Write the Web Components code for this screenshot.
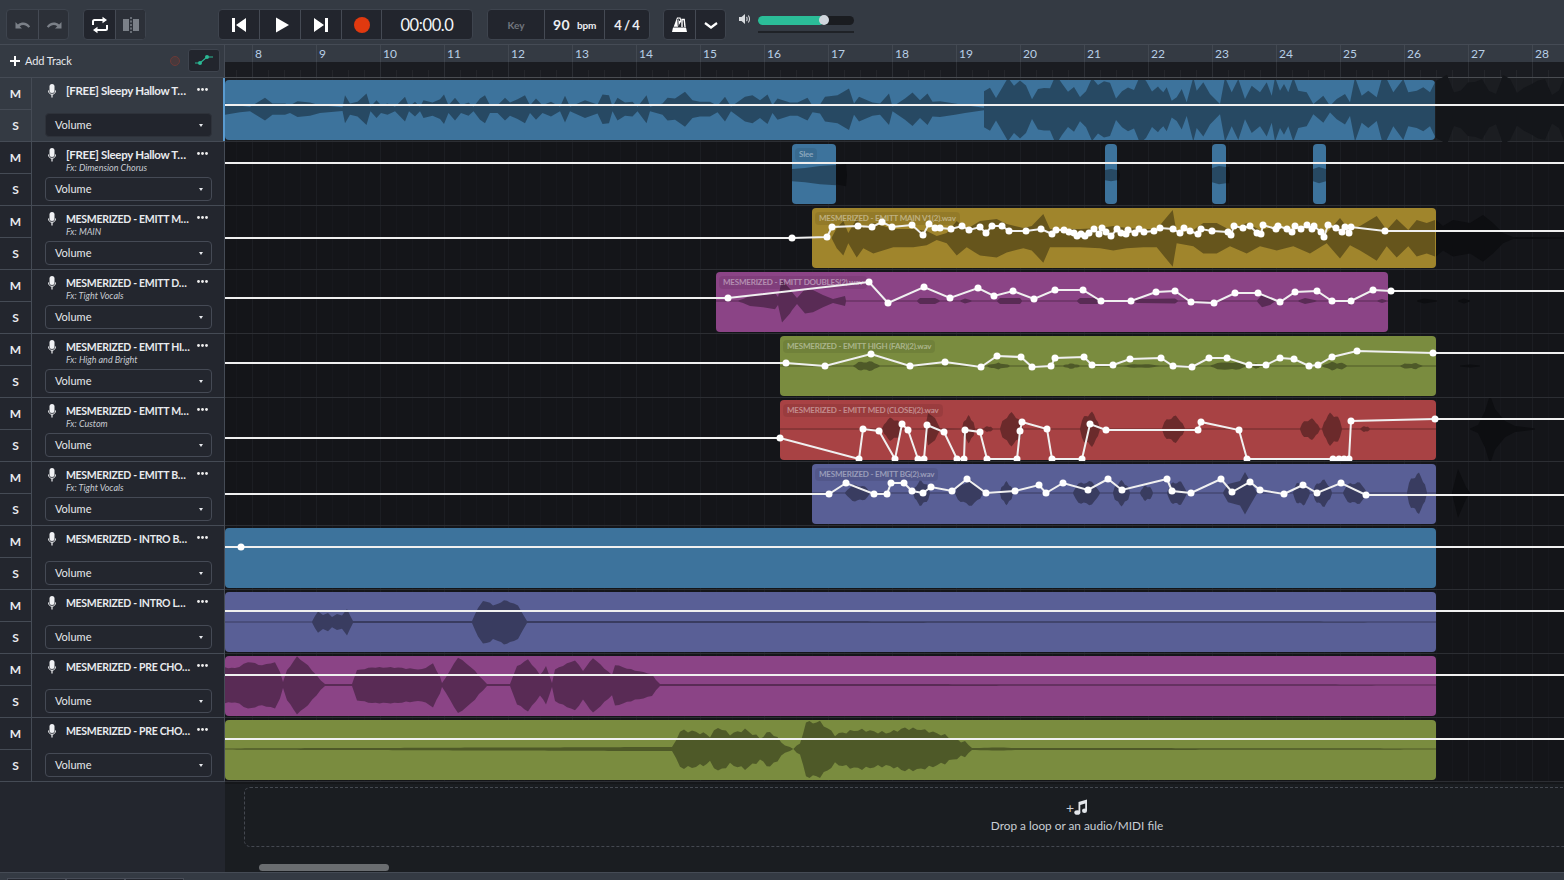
<!DOCTYPE html>
<html>
<head>
<meta charset="utf-8">
<title>Studio</title>
<style>
  html, body { margin: 0; height: 100%; background: #343a43; overflow: hidden; }
  body { font-family: "Lato", "Noto Sans", sans-serif; color: #e8eaee; }
</style>
</head>
<body>
<daw-app>
  <daw-toolbar slot="toolbar"></daw-toolbar>
  <daw-header slot="header"></daw-header>
  <daw-footer slot="footer"></daw-footer>
</daw-app>

<script>
const ICONS = {
  undo: '<path d="M1.500 6v6.500H8L5.700 10.200c2.800-2 6.300-1.500 8.600 1.500l1.900-1.200C13 5.800 8 5.300 3.900 8.400z" fill="currentColor"/>',
  redo: '<path d="M16.500 6v6.500H10l2.300-2.300c-2.800-2-6.300-1.500-8.600 1.500L1.800 10.500C5 5.800 10 5.300 14.100 8.400z" fill="currentColor"/>',
  loop: '<path d="M2 9V5.500C2 4.600 2.700 4 3.500 4H13M16 9v3.500c0 .9-.7 1.500-1.500 1.500H5" fill="none" stroke="currentColor" stroke-width="2"/><path d="M11.500 0.800 16 4l-4.500 3.200zM6.500 10.800 2 14l4.500 3.200z" fill="currentColor"/>',
  split: '<path d="M1 3h6v12H1zM11 3h6v12h-6z" fill="currentColor"/><path d="M9 1v16" stroke="currentColor" stroke-width="1.500" stroke-dasharray="2 1.500" fill="none"/>',
  back: '<path d="M1 2h3v14H1zM15 2v14L5 9z" fill="currentColor"/>',
  play: '<path d="M3 1.500 16 9 3 16.500z" fill="currentColor"/>',
  forward: '<path d="M14 2h3v14h-3zM3 2v14l10-7z" fill="currentColor"/>',
  metronome: '<path d="M6 1.500h3.500L10.500 5 6.800 10.800H2.700zM2 11.500h13l1 4.500H1z" fill="currentColor"/><path d="M7.200 9.800 6.800 3h1.700l.2 2M12 2.500 12 10" fill="none" stroke="#23262e" stroke-width="1"/><path d="M11 11V3.500h2.200L14 11" fill="none" stroke="currentColor" stroke-width="1.400"/>',
  chevron: '<path d="M3 7l6 4.500L15 7" fill="none" stroke="currentColor" stroke-width="2.200"/>'
};

function icon(name, size) {
  return `<svg width="${size}" height="${size}" viewBox="0 0 18 18">${ICONS[name]}</svg>`;
}

// turn an envelope [x, amp, x, amp ...] into a closed waveform around cy
function wavePath(env, cy, wobble) {
  const pts = [];
  for (let i = 0; i < env.length - 2; i += 2) {
    const x0 = env[i], a0 = env[i + 1], x1 = env[i + 2], a1 = env[i + 3];
    const steps = wobble ? Math.max(1, Math.round((x1 - x0) / 4)) : 1;
    for (let s = 0; s < steps; s++) {
      const t = s / steps, x = x0 + (x1 - x0) * t;
      let a = a0 + (a1 - a0) * t;
      if (wobble && a > 2) a += Math.sin(x * 1.7) * wobble + Math.sin(x * 0.6) * wobble;
      pts.push([x, a]);
    }
  }
  pts.push([env[env.length - 2], env[env.length - 1]]);
  const top = pts.map(p => `${p[0].toFixed(1)},${(cy - p[1]).toFixed(1)}`);
  const bottom = pts.slice().reverse().map(p => `${p[0].toFixed(1)},${(cy + p[1] * 1.03).toFixed(1)}`);
  return 'M' + top.concat(bottom).join('L') + 'Z';
}

// one rounded phrase of a vocal, with a thin line either side of it
function blob(x0, x1, amp) {
  const out = [x0, 0.6];
  for (let i = 1; i < 10; i++) {
    const t = i / 10;
    const a = amp * Math.pow(Math.sin(Math.PI * t), 0.6) * (0.86 + 0.14 * Math.sin(14 * t + x0));
    out.push(x0 + (x1 - x0) * t, a);
  }
  out.push(x1, 0.6);
  return out;
}

const tplApp = document.createElement('template');
tplApp.innerHTML = `
  <style>
    :host { display: flex; flex-direction: column; width: 1564px; height: 880px; overflow: hidden; background: #343a43; }
    .tracks { display: flex; flex-direction: column; }
    .tabs { display: flex; height: 8px; padding: 5px 0 0 7px; box-sizing: border-box; background: #343a43; border-top: 1px solid #454b55; flex: none; }
    .tabs i { display: block; width: 59px; height: 8px; background: #23262e; border: 1px solid #474c57; border-bottom: 0; box-sizing: border-box; }
  </style>
  <slot name="toolbar"></slot>
  <slot name="header"></slot>
  <div class="tracks"><slot></slot></div>
  <slot name="footer"></slot>
  <div class="tabs"><i></i><i></i><i></i></div>
`;
class DawApp extends HTMLElement {
  constructor() {
    super();
    this.attachShadow({ mode: 'open' });
    this.shadowRoot.appendChild(tplApp.content.cloneNode(true));
  }
}

const tplToolbar = document.createElement('template');
tplToolbar.innerHTML = `
  <style>
    :host { display: flex; align-items: flex-start; box-sizing: border-box; height: 45px; padding: 9px 0 0 6px; background: #343a43; border-bottom: 1px solid #454b55; flex: none; }
    .group { display: flex; height: 31px; border: 1px solid #3e444e; border-radius: 4px; background: #22252d; box-sizing: border-box; overflow: hidden; }
    .group.off { background: #2c3038; }
    .cell { display: flex; align-items: center; justify-content: center; box-sizing: border-box; height: 100%; border-left: 1px solid #454a54; color: #fff; }
    .cell:first-child { border-left: 0; }
    .cell.dim { background: #2c3038; color: #7b8088; }
    .rec { width: 16px; height: 16px; border-radius: 50%; background: #e0390f; }
    .time { font-size: 16.500px; letter-spacing: -.4px; color: #f3f5f8; }
    .key { font-size: 10px; color: #71757d; font-weight: 700; }
    .bpm { font-size: 14px; font-weight: 700; color: #eceef2; letter-spacing: .4px; }
    .bpm small { font-size: 10px; margin-left: 7px; letter-spacing: -.2px; }
    .sig { font-size: 13px; font-weight: 700; color: #eceef2; word-spacing: -1px; }
    .vol { display: flex; flex-direction: column; margin-left: 7px; margin-top: 7px; gap: 6px; }
    .bar { position: relative; width: 96px; height: 9px; border-radius: 5px; background: #1a1c20; }
    .bar b { display: block; width: 66px; height: 9px; border-radius: 5px; background: #2bbd98; }
    .bar i { position: absolute; left: 61px; top: -1px; width: 10px; height: 10px; border-radius: 50%; background: #d0d6dd; }
    .rule { width: 96px; height: 2px; background: #1f2227; }
    .speaker { margin: 4px 0 0 13px; color: #d9dce0; }
  </style>
  <div class="group off" style="width:63px">
    <div class="cell" style="width:32px;color:#7b8088">${icon('undo', 18)}</div>
    <div class="cell" style="width:30px;color:#7b8088">${icon('redo', 18)}</div>
  </div>
  <div class="group" style="width:63px;margin-left:14px">
    <div class="cell" style="width:32px">${icon('loop', 18)}</div>
    <div class="cell dim" style="width:30px">${icon('split', 18)}</div>
  </div>
  <div class="group" style="width:255px;margin-left:72px">
    <div class="cell" style="width:40px;padding-left:2px">${icon('back', 18)}</div>
    <div class="cell" style="width:41px;padding-left:3px">${icon('play', 18)}</div>
    <div class="cell" style="width:41px;padding-right:2px">${icon('forward', 18)}</div>
    <div class="cell" style="width:40px"><span class="rec"></span></div>
    <div class="cell time" style="width:91px">00:00.0</div>
  </div>
  <div class="group" style="width:163px;margin-left:14px">
    <div class="cell key" style="width:56px">Key</div>
    <div class="cell bpm" style="width:60px">90<small>bpm</small></div>
    <div class="cell sig" style="width:45px">4 / 4</div>
  </div>
  <div class="group" style="width:63px;margin-left:13px">
    <div class="cell" style="width:32px">${icon('metronome', 18)}</div>
    <div class="cell" style="width:30px">${icon('chevron', 18)}</div>
  </div>
  <svg class="speaker" width="12" height="12" viewBox="0 0 12 12"><path d="M0 4h2.500L6 1v10L2.500 8H0z" fill="currentColor"/><path d="M7.500 4c.8.8.8 3.200 0 4M9.300 2.500c1.600 1.800 1.600 5.200 0 7" fill="none" stroke="currentColor" stroke-width="1.100"/></svg>
  <div class="vol"><div class="bar"><b></b><i></i></div><div class="rule"></div></div>
`;
class DawToolbar extends HTMLElement {
  constructor() {
    super();
    this.attachShadow({ mode: 'open' });
    this.shadowRoot.appendChild(tplToolbar.content.cloneNode(true));
  }
}

const tplHeader = document.createElement('template');
tplHeader.innerHTML = `
  <style>
    :host { display: flex; height: 33px; flex: none; }
    .left { display: flex; align-items: center; box-sizing: border-box; width: 225px; padding: 0 4px 0 10px; border-right: 1px solid #454b55; border-bottom: 1px solid #454b55; font-size: 11px; letter-spacing: -.1px; color: #e6e8ec; }
    .plus { width: 10px; height: 10px; margin-right: 5px; }
    .label { flex: 1; margin-top: -2px; }
    .arm { width: 8px; height: 8px; border-radius: 50%; border: 1px solid #6a3a38; background: #48393c; margin-right: 8px; }
    .auto { display: flex; align-items: center; justify-content: center; width: 32px; height: 23px; margin-top: -2px; background: #22252d; border: 1px solid #3e444e; border-radius: 3px; box-sizing: border-box; }
    .ruler { flex: 1; display: flex; flex-direction: column; overflow: hidden; }
    .bars { display: flex; height: 17px; padding-left: 27px; background: #343a43; }
    .bars span { flex: 0 0 64px; box-sizing: border-box; padding: 1px 0 0 2px; font-size: 12px; line-height: 15px; color: #b8cfe6; border-left: 1px solid #424851; }
    .ticks { flex: 1; box-sizing: border-box; border-bottom: 1px solid #4a4d52; background-color: #1a1c21;
      background-image:
        linear-gradient(90deg, #2c2f35 1px, transparent 1px),
        linear-gradient(90deg, #24262b 1px, transparent 1px);
      background-size: 64px 100%, 16px 7px;
      background-position: 27px 0, 11px bottom;
      background-repeat: repeat-x; }
  </style>
  <div class="left">
    <svg class="plus" viewBox="0 0 10 10"><path d="M4 0h2v4h4v2H6v4H4V6H0V4h4z" fill="#fff"/></svg>
    <span class="label">Add Track</span>
    <span class="arm"></span>
    <span class="auto"><svg width="20" height="12" viewBox="0 0 20 12"><path d="M1 9h5L13 3h6" fill="none" stroke="#2bb894" stroke-width="1.200"/><circle cx="6" cy="9" r="2" fill="#2bb894"/><circle cx="13" cy="3" r="2" fill="#2bb894"/></svg></span>
  </div>
  <div class="ruler"><div class="bars"></div><div class="ticks"></div></div>
`;
class DawHeader extends HTMLElement {
  constructor() {
    super();
    this.attachShadow({ mode: 'open' });
    this.shadowRoot.appendChild(tplHeader.content.cloneNode(true));
    const bars = this.shadowRoot.querySelector('.bars');
    for (let n = 8; n <= 28; n++) {
      const s = document.createElement('span');
      s.textContent = n;
      bars.appendChild(s);
    }
  }
}

const tplTrack = document.createElement('template');
tplTrack.innerHTML = `
  <style>
    :host { display: flex; height: 64px; flex: none; }
    .head { display: flex; width: 225px; flex: none; box-sizing: border-box; background: #23262e; border-right: 1px solid #454b55; border-bottom: 1px solid #454b55; }
    :host([selected]) .head { background: #343a43; border-right: 0; box-shadow: inset -2px 0 0 #5a9bd0; }
    .ms { display: flex; flex-direction: column; width: 32px; flex: none; box-sizing: border-box; border-right: 1px solid #454b55; font-weight: 700; font-size: 12px; color: #e8eaee; }
    .ms span { display: flex; align-items: center; justify-content: center; height: 31px; }
    .ms span:first-child { border-bottom: 1px solid #454b55; }
    .ms span:last-child { flex: 1; }
    .body { flex: 1; min-width: 0; box-sizing: border-box; padding: 6px 0 0 16px; position: relative; }
    .title { display: flex; align-items: center; height: 15px; }
    .mic { width: 8px; height: 14px; flex: none; margin-right: 10px; margin-top: -2px; }
    .name { width: 126px; flex: none; margin-top: -2px; font-size: 10.500px; letter-spacing: -.3px; font-weight: 700; white-space: nowrap; color: #e9ebef; }
    :host([mixed]) .name { font-size: 11.500px; }
    .dots { width: 11px; height: 3px; margin-left: 5px; margin-top: -5px; flex: none; }
    .fx { position: absolute; left: 34px; top: 20px; font-size: 9px; font-style: italic; color: #c7cbd2; line-height: 11px; }
    .select { position: absolute; left: 13px; top: 35px; display: flex; align-items: center; justify-content: space-between; box-sizing: border-box; width: 167px; height: 24px; padding: 0 8px 2px 9px; font-size: 11px; color: #e6e8ec; background: #23262e; border: 1px solid #454a55; border-radius: 4px; }
    :host([selected]) .select { background: #22252d; border-color: #2e323a; }
    .caret { width: 0; height: 0; margin-top: 3px; border: 2.500px solid transparent; border-top: 3.500px solid #e6e8ec; border-bottom: 0; }
    .lane { position: relative; flex: 1; box-sizing: border-box; border-bottom: 1px solid #2c2e33; overflow: hidden; background-color: #141519;
      background-image:
        linear-gradient(90deg, #1c1e23 1px, transparent 1px),
        linear-gradient(90deg, #17181d 1px, transparent 1px);
      background-size: 64px 100%, 16px 100%;
      background-position: 27px 0, 11px 0; }
    :host([selected]) .lane { background-color: #1b1d21; overflow: visible; }
    :host([selected]) .lane { background-image: linear-gradient(90deg, #212328 1px, transparent 1px), linear-gradient(90deg, #1e2025 1px, transparent 1px); }
  </style>
  <div class="head">
    <div class="ms"><span>M</span><span>S</span></div>
    <div class="body">
      <div class="title">
        <svg class="mic" viewBox="0 0 8 14"><rect x="1.500" y="0" width="5" height="9" rx="2.500" fill="#f0f1f4"/><path d="M0.500 6.500C0.500 9 2 10.300 4 10.300S7.500 9 7.500 6.500" fill="none" stroke="#f0f1f4" stroke-width="1"/><path d="M4 10.300V13.500" stroke="#f0f1f4" stroke-width="1.200"/></svg>
        <span class="name"></span>
        <svg class="dots" viewBox="0 0 11 3"><circle cx="1.500" cy="1.500" r="1.400" fill="#eee"/><circle cx="5.500" cy="1.500" r="1.400" fill="#eee"/><circle cx="9.500" cy="1.500" r="1.400" fill="#eee"/></svg>
      </div>
      <div class="fx"></div>
      <div class="select"><span>Volume</span><i class="caret"></i></div>
    </div>
  </div>
  <div class="lane"><slot></slot></div>
`;
class DawTrack extends HTMLElement {
  constructor() {
    super();
    this.attachShadow({ mode: 'open' });
    this.shadowRoot.appendChild(tplTrack.content.cloneNode(true));
  }

  connectedCallback() {
    this.shadowRoot.querySelector('.name').textContent = this.getAttribute('name');
    this.shadowRoot.querySelector('.fx').textContent = this.getAttribute('fx') || '';
  }
}

const tplClip = document.createElement('template');
tplClip.innerHTML = `
  <style>
    :host { display: block; position: absolute; top: 2px; height: 60px; border-radius: 4px; overflow: hidden; background: var(--clip-color); }
    svg { position: absolute; left: 0; top: 0; display: block; }
    .label { position: absolute; left: 3px; top: 4px; padding: 0 4px; height: 13px; line-height: 13px; border-radius: 4px; background: rgba(0, 0, 0, 0.08); color: rgba(255, 255, 255, 0.42); font-size: 8px; letter-spacing: -.2px; font-weight: 700; white-space: nowrap; }
  </style>
  <svg><path fill="rgba(0,0,0,.36)"/></svg>
  <span class="label"><slot></slot></span>
`;
class DawClip extends HTMLElement {
  constructor() {
    super();
    this.attachShadow({ mode: 'open' });
    this.shadowRoot.appendChild(tplClip.content.cloneNode(true));
  }

  connectedCallback() {
    const x = +this.getAttribute('x');
    const w = +this.getAttribute('w');
    const top = +this.getAttribute('top');
    this.style.left = (x - 225) + 'px';
    this.style.width = w + 'px';
    const svg = this.shadowRoot.querySelector('svg');
    svg.setAttribute('width', w);
    svg.setAttribute('height', 60);
    svg.setAttribute('viewBox', `${x} ${top + 2} ${w} 60`);
    if (this.env) svg.firstElementChild.setAttribute('d', wavePath(this.env, this.cy, this.wobble));
    if (!this.textContent.trim()) this.shadowRoot.querySelector('.label').style.display = 'none';
  }
}

// lane-wide layer in page coordinates: ghost waveform or automation line
const tplLayer = document.createElement('template');
tplLayer.innerHTML = `
  <style>
    :host { display: block; position: absolute; left: 0; top: 0; pointer-events: none; }
    svg { display: block; overflow: visible; }
  </style>
  <svg width="1339" height="64"></svg>
`;
class DawLayer extends HTMLElement {
  constructor() {
    super();
    this.attachShadow({ mode: 'open' });
    this.shadowRoot.appendChild(tplLayer.content.cloneNode(true));
  }

  connectedCallback() {
    const svg = this.shadowRoot.querySelector('svg');
    svg.setAttribute('viewBox', `225 ${this.top0} 1339 64`);
    if (this.ghost) {
      svg.innerHTML = this.ghost.map(g =>
        `<path d="${wavePath(g, this.cy, 0)}" fill="${this.fill}"/>`).join('');
    }
    if (this.points) {
      const p = this.points;
      const line = [[225, this.startY], ...p, [1564, this.endY]];
      const poly = line.map(q => q.join(',')).join(' ');
      const dots = p.map(q => `<circle cx="${q[0]}" cy="${q[1]}" r="3.500" fill="#fff"/>`).join('');
      svg.innerHTML = `<polyline points="${poly}" fill="none" stroke="#f0f0f0" stroke-width="2"/>${dots}`;
    }
  }
}

const tplFooter = document.createElement('template');
tplFooter.innerHTML = `
  <style>
    :host { display: flex; flex: 1; min-height: 0; }
    .left { width: 225px; flex: none; background: #23262e; }
    .area { position: relative; flex: 1; overflow: hidden; background: #1a1d21; border-top: 2px solid #15171a; box-sizing: border-box; }
    .drop { position: absolute; left: 19px; top: 3px; width: 1666px; height: 60px; box-sizing: border-box; border: 1px dashed #444850; border-radius: 6px; display: flex; flex-direction: column; align-items: center; color: #c9ced4; font-size: 11.800px; }
    .note { display: flex; align-items: center; height: 20px; margin-top: 9px; font-size: 14px; }
    .text { line-height: 16px; margin-top: 1px; }
    .thumb { position: absolute; left: 34px; top: 80px; width: 130px; height: 7px; border-radius: 4px; background: #6a6d70; }
  </style>
  <div class="left"></div>
  <div class="area">
    <div class="drop">
      <div class="note"><span>+</span><svg width="14" height="16" viewBox="0 0 14 16"><path d="M4.500 3 13 0.500v11.200h-1.800V4.500L6.300 6v7.500H4.500z" fill="#e3e6ea"/><ellipse cx="3.300" cy="13.500" rx="3" ry="2.300" fill="#e3e6ea"/><ellipse cx="10.500" cy="11.800" rx="2.500" ry="2.200" fill="#e3e6ea"/></svg></div>
      <div class="text">Drop a loop or an audio/MIDI file</div>
    </div>
    <div class="thumb"></div>
  </div>
`;
class DawFooter extends HTMLElement {
  constructor() {
    super();
    this.attachShadow({ mode: 'open' });
    this.shadowRoot.appendChild(tplFooter.content.cloneNode(true));
  }
}

customElements.define('daw-app', DawApp);
customElements.define('daw-toolbar', DawToolbar);
customElements.define('daw-header', DawHeader);
customElements.define('daw-track', DawTrack);
customElements.define('daw-clip', DawClip);
customElements.define('daw-layer', DawLayer);
customElements.define('daw-footer', DawFooter);

const BLUE = '#3d739c', GOLD = '#a0852c', PURPLE = '#8b4486', OLIVE = '#7a8c3f', RED = '#a84244', INDIGO = '#595f96';

// waveform of the first track, read off the reference
const quiet = [0,75,30,82,50,85,80,58,95,75,120,75,130,80,145,68,170,72,190,80,235,86,240,50,250,75,265,70,283,45,291,85,303,65,312,80,325,75,340,85,360,55,368,85,380,70,390,85,397,65,415,72,430,62,438,48,447,80,460,58,472,80,487,72,497,85,510,60,520,50,530,80,545,80,560,58,570,72,585,62,600,50,610,80,622,60,635,80,652,70,670,85,680,52,690,85,720,65,745,78,755,48,768,50,775,85,785,58,800,72,815,70,825,85,843,50,850,85,875,75,885,58,900,60,920,40,935,65,950,70,970,70,985,82,1000,55,1012,85,1040,55,1055,50,1070,65,1085,48,1095,80,1105,60,1130,72,1145,72,1165,58,1175,82,1190,78,1200,55,1225,50,1248,30,1258,75,1268,55,1295,72,1310,75,1328,45,1335,85,1360,60,1375,42,1390,65,1405,45,1415,70,1430,68,1460,75,1480,80,1518,88];
const loud = [0,90,10,100,20,85,35,125,50,115,65,90,80,130,100,55,110,95,130,70,150,105,180,135,195,55,215,100,235,60,255,120,275,80,300,100,320,70,335,110,345,55,360,95,372,75,385,100,400,55,415,95,440,100,460,135,490,110,510,140,530,120,555,105,570,130,585,55,605,110,625,95,650,115,665,60,680,60,700,100,730,60,745,100,770,95,790,85,810,100,825,70];
const env1 = [];
for (let i = 0; i < quiet.length; i += 2) env1.push(225 + quiet[i] / 2, 30.500 - quiet[i + 1] / 3);
const mid1 = [];
for (let x = 984; x < 1160; x += 6) {
  mid1.push(x, 22 + Math.sin(x * 0.9) * 7 + Math.sin(x * 0.37) * 6);
}
const loud1 = [];
for (let i = 0; i < loud.length; i += 2) loud1.push(1160 + loud[i] / 3, (150 - loud[i + 1]) / 3);
const tail1 = [];
for (let x = 1440; x <= 1570; x += 7) {
  tail1.push(x, 24 + Math.sin(x * 1.1) * 8 + Math.sin(x * 0.31) * 5);
}

const gold1 = [155,.5,170,10,190,17,205,5,230,19,250,10,280,15,340,9,400,9,440,7,470,2,500,5,530,17,560,9,585,14,600,17,650,19,680,14,730,10,755,12,790,24,810,9,850,9,900,9,960,10,1000,12,1040,10,1090,9,1130,9];
const gold2 = [38,28,50,5,100,8,130,15,170,15,210,8,260,15,300,8,350,12,400,8,450,15,500,5,540,20,570,7,600,12,650,22,680,8,710,19,745,8,770,18,800,15,825,18];
const goldEnv = [];
for (let i = 0; i < gold1.length; i += 2) goldEnv.push(780 + gold1[i] / 3, gold1[i + 1]);
for (let i = 0; i < gold2.length; i += 2) goldEnv.push(1160 + gold2[i] / 3, gold2[i + 1]);

const purpleEnv = [716,.6,738,.6,743,2,750,5,763,6,775,8,778,4,782,21,790,12,792,9,797,3,805,12,813,11,823,6,833,2,845,5,846,.6,917,.6,920,3,935,3,940,.6,960,.6,965,2.500,972,.6,997,.6,1000,3,1020,3,1022,.6,1077,.6,1080,3,1097,3,1100,.6,1133,.6,1137,2,1175,2.500,1178,.6,1257,.6,1262,6,1270,4,1275,.6,1298,.6,1305,3,1317,.6,1347,.6,1350,5,1353,.6,1377,.6,1382,2,1387,.6,1436,.6];
const oliveEnv = [].concat(blob(853, 880, 5), blob(987, 1010, 3), blob(1063, 1080, 2.500), blob(1123, 1160, 2), blob(1210, 1247, 4), blob(1252, 1260, 3), blob(1322, 1347, 4), blob(1400, 1423, 3));
const redEnv = [].concat(blob(882, 902, 12), [925,.6,928,16,935,11,940,.8], blob(962, 975, 14), blob(983, 993, 3), blob(1000, 1023, 17), blob(1080, 1100, 18), blob(1162, 1185, 14), blob(1300, 1320, 11), blob(1322, 1342, 17), blob(1360, 1370, 3));
const indigoEnv = [].concat(blob(845, 870, 9), blob(913, 930, 13), blob(955, 983, 13), blob(1000, 1013, 12), blob(1073, 1100, 13), blob(1113, 1130, 13), blob(1140, 1153, 8), blob(1167, 1187, 13), [1223,.6,1228,9,1240,12,1245,21,1250,12,1257,.6], blob(1293, 1310, 13), blob(1313, 1332, 14), blob(1343, 1367, 12), blob(1407, 1427, 21));
const lowIndigo = [225,.6,312,.6,318,10,323,7,328,9,332,6,337,7,342,7,347,13,353,1,472,1,478,14,483,21,490,20,493,16,498,19,504,21,510,20,518,16,527,1,1436,.6];
const pinkEnv = [225,18,235,17,248,23,262,20,275,22,280,14,283,3,287,15,297,28,308,19,325,1,352,1,357,15,372,18,398,18,422,15,433,21,440,8,442,2,458,28,475,14,487,1,510,1,517,19,528,26,540,10,546,19,552,2,555,15,575,25,583,15,593,27,612,10,615,20,635,15,652,10,660,1,1436,.6];
const oliveLow = [672,2,680,18,700,15,710,12,718,20,730,15,745,20,760,12,770,16,785,3,790,2,800,4,806,26,820,28,835,15,850,18,870,17,890,18,905,22,925,17,945,15,965,6,972,1,1000,1.500,1015,1,1436,.6];

const TRACKS = [
  { name: '[FREE] Sleepy Hallow T…', selected: true, line: [105, 105], points: [],
    ghost: [[1436, 28, ...tail1.slice(2)]], cy: 109,
    clips: [{ x: 225, w: 1210, color: BLUE, env: [...env1, ...mid1, ...loud1] }] },
  { name: '[FREE] Sleepy Hallow T…', fx: 'Fx: Dimension Chorus', line: [163, 163], points: [], cy: 175,
    ghost: [[836, 9, 846, 11, 847, 0], [1117, 5, 1119, 5, 1120, 0], [1226, 8, 1229, 8, 1230, 0]],
    clips: [
      { x: 792, w: 44, color: BLUE, label: 'Slee', env: [792, 6, 805, 7, 820, 9, 836, 10] },
      { x: 1105, w: 12, color: BLUE, env: [1105, 5, 1111, 6, 1117, 5] },
      { x: 1212, w: 14, color: BLUE, env: [1212, 7, 1219, 9, 1226, 8] },
      { x: 1313, w: 13, color: BLUE, env: [1313, 6, 1319, 8, 1326, 6] }] },
  { name: 'MESMERIZED - EMITT M…', fx: 'Fx: MAIN', line: [238, 231], cy: 238,
    ghost: [[1436, 18, 1443, 12, 1453, 18, 1470, 15, 1483, 23, 1493, 15, 1503, 5, 1513, 1, 1564, .5]],
    points: [[792,238],[827,237],[832,227],[858,226],[872,227],[882,222],[892,227],[912,225],[923,235],[929,224],[935,228],[940,228],[951,229],[962,226],[969,230],[980,227],[986,233],[992,226],[1002,226],[1009,231],[1026,231],[1041,229],[1052,234],[1056,230],[1064,230],[1069,232],[1074,233],[1077,236],[1081,234],[1085,236],[1089,233],[1094,229],[1099,234],[1102,228],[1106,232],[1111,236],[1117,229],[1121,233],[1126,234],[1128,230],[1135,233],[1139,229],[1144,232],[1154,231],[1160,228],[1173,229],[1180,233],[1184,228],[1190,231],[1198,234],[1201,229],[1212,231],[1228,232],[1231,235],[1234,226],[1243,228],[1250,226],[1257,233],[1261,234],[1263,225],[1276,229],[1278,226],[1287,229],[1292,232],[1295,226],[1301,229],[1307,225],[1312,229],[1314,226],[1321,232],[1324,237],[1328,225],[1336,228],[1342,232],[1345,227],[1349,233],[1351,227],[1385,231]],
    clips: [{ x: 812, w: 624, color: GOLD, label: 'MESMERIZED - EMITT MAIN V1(2).wav', env: goldEnv }] },
  { name: 'MESMERIZED - EMITT D…', fx: 'Fx: Tight Vocals', line: [298, 291], cy: 301,
    ghost: [[1417, .6, 1424, 2.500, 1437, .6], [1458, .6, 1464, 2.500, 1470, .6]],
    points: [[728,298],[869,282],[888,303],[924,287],[950,298],[978,288],[994,296],[1013,291],[1034,299],[1055,290],[1083,290],[1101,301],[1131,301],[1156,292],[1175,291],[1191,302],[1214,303],[1235,293],[1258,293],[1280,302],[1295,292],[1317,291],[1332,301],[1351,301],[1373,290],[1391,291]],
    clips: [{ x: 716, w: 672, color: PURPLE, label: 'MESMERIZED - EMITT DOUBLES(2).wav', env: purpleEnv }] },
  { name: 'MESMERIZED - EMITT HI…', fx: 'Fx: High and Bright', line: [363, 353], cy: 366,
    ghost: [[1460, .6, 1470, 1.500, 1480, .6]],
    points: [[786,363],[825,366],[871,354],[910,366],[945,362],[981,367],[997,356],[1021,357],[1032,367],[1051,366],[1055,358],[1084,357],[1092,365],[1113,365],[1130,359],[1161,358],[1173,366],[1192,367],[1209,358],[1227,358],[1249,365],[1266,365],[1280,358],[1294,359],[1309,366],[1318,365],[1332,357],[1357,351],[1433,353]],
    clips: [{ x: 780, w: 656, color: OLIVE, label: 'MESMERIZED - EMITT HIGH (FAR)(2).wav', env: [780, .6, ...oliveEnv, 1436, .6], wobble: .3 }] },
  { name: 'MESMERIZED - EMITT M…', fx: 'Fx: Custom', line: [438, 419], cy: 429,
    ghost: [[1470, .6, 1478, 4, 1485, 18, 1490, 34, 1495, 20, 1505, 8, 1515, 3, 1535, .6]],
    points: [[780,438],[859,459],[863,429],[879,431],[895,459],[902,424],[908,430],[918,459],[924,459],[927,425],[944,432],[957,459],[964,459],[965,430],[980,432],[987,459],[1017,459],[1020,431],[1022,422],[1047,429],[1052,459],[1082,459],[1090,424],[1106,430],[1198,430],[1201,422],[1239,430],[1247,459],[1333,459],[1339,459],[1344,459],[1349,459],[1351,421],[1435,419]],
    clips: [{ x: 780, w: 656, color: RED, label: 'MESMERIZED - EMITT MED (CLOSE)(2).wav', env: [780, .6, ...redEnv, 1436, .6] }] },
  { name: 'MESMERIZED - EMITT B…', fx: 'Fx: Tight Vocals', line: [494, 495], cy: 493,
    ghost: [[1452, .6, 1458, 24, 1466, 6, 1470, .6]],
    points: [[829,494],[846,483],[874,494],[887,494],[891,483],[904,483],[912,491],[923,493],[931,487],[952,491],[967,479],[986,493],[1015,491],[1039,485],[1046,493],[1063,483],[1088,490],[1108,479],[1122,490],[1167,479],[1172,491],[1191,493],[1221,479],[1232,492],[1250,482],[1260,490],[1284,494],[1303,485],[1317,493],[1341,483],[1366,495]],
    clips: [{ x: 812, w: 624, color: INDIGO, label: 'MESMERIZED - EMITT BG(2).wav', env: [812, .6, ...indigoEnv, 1436, .6] }] },
  { name: 'MESMERIZED - INTRO B…', line: [547, 547], points: [[241, 547]],
    clips: [{ x: 225, w: 1211, color: BLUE }] },
  { name: 'MESMERIZED - INTRO L…', line: [611, 611], points: [], cy: 622,
    clips: [{ x: 225, w: 1211, color: INDIGO, env: lowIndigo, wobble: .5 }] },
  { name: 'MESMERIZED - PRE CHO…', line: [675, 675], points: [], cy: 685,
    clips: [{ x: 225, w: 1211, color: PURPLE, env: pinkEnv, wobble: .5 }] },
  { name: 'MESMERIZED - PRE CHO…', line: [739, 739], points: [], cy: 749,
    clips: [{ x: 225, w: 1211, color: OLIVE, env: [225, .6, ...oliveLow], wobble: 1.5 }] }
];

const app = document.querySelector('daw-app');
TRACKS.forEach((t, i) => {
  const top = 78 + i * 64;
  const track = document.createElement('daw-track');
  track.setAttribute('name', t.name);
  if (t.name.startsWith('[')) track.setAttribute('mixed', '');
  if (t.fx) track.setAttribute('fx', t.fx);
  if (t.selected) track.setAttribute('selected', '');

  if (t.ghost) {
    const ghost = document.createElement('daw-layer');
    ghost.top0 = top;
    ghost.cy = t.cy;
    ghost.ghost = t.ghost;
    ghost.fill = t.selected ? '#14161a' : '#0d0e11';
    track.appendChild(ghost);
  }
  t.clips.forEach(c => {
    const clip = document.createElement('daw-clip');
    clip.setAttribute('x', c.x);
    clip.setAttribute('w', c.w);
    clip.setAttribute('top', top);
    clip.style.setProperty('--clip-color', c.color);
    clip.env = c.env;
    clip.cy = t.cy;
    clip.wobble = c.wobble;
    clip.textContent = c.label || '';
    track.appendChild(clip);
  });
  const auto = document.createElement('daw-layer');
  auto.top0 = top;
  auto.points = t.points;
  auto.startY = t.line[0];
  auto.endY = t.line[1];
  track.appendChild(auto);
  app.appendChild(track);
});
</script>
</body>
</html>
